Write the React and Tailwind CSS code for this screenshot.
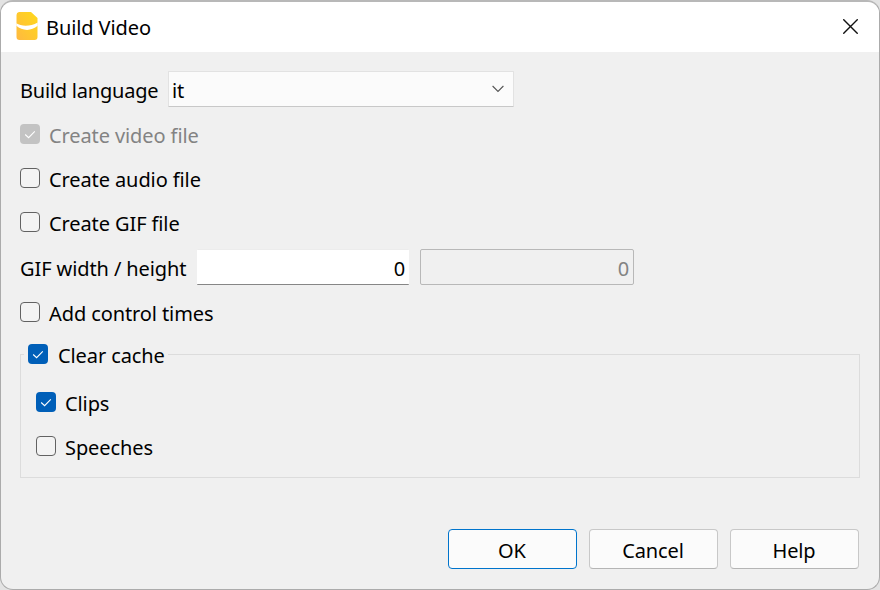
import React from "react";

const boxStyles = {
  off: "border border-[#626262] bg-[#f3f3f3]",
  on: "bg-[#005fb8]",
  disabled: "bg-[#c3c3c3]",
};

function CheckRow({ state = "off", label, gap = "gap-[9px]", text = "" }) {
  return (
    <label className={`flex h-5 items-center ${gap}`}>
      <span className={`flex size-5 shrink-0 items-center justify-center rounded-[4px] ${boxStyles[state]}`}>
        {state !== "off" && (
          <svg viewBox="0 0 20 20" className="size-5" fill="none" stroke="#fff" strokeWidth="1.1">
            <path d="M5.2 10.500 8.600 13.700 14.800 7.300" />
          </svg>
        )}
      </span>
      <span className={`whitespace-nowrap pt-1 ${text}`}>{label}</span>
    </label>
  );
}

function Button({ label, primary }) {
  return (
    <button
      className={`h-10 w-[129px] rounded-[4px] border bg-[#fbfbfb] pt-1 pr-px ${
        primary ? "border-[#0074cc]" : "border-[#c8c8c8] border-b-[#b5b5b5]"
      }`}
    >
      {label}
    </button>
  );
}

export default function App() {
  return (
    <div className="h-[590px] w-[880px] bg-[#e3e3e3] font-['Noto_Sans','Open_Sans',sans-serif] text-[20px] leading-5 tracking-[-0.1px] text-black">
      <div className="flex h-full flex-col overflow-hidden rounded-[13px] border border-t-2 border-[#ababab] border-t-[#b8b8b8] bg-[#f0f0f0]">
        <header className="flex h-[50px] shrink-0 items-center bg-white pl-[15px] pr-[21px]">
          <svg viewBox="0 0 22 28" className="mb-[2px] h-7 w-[22px]">
            <defs>
              <linearGradient id="doc" x1="0" y1="1" x2="1" y2="0">
                <stop offset="0" stopColor="#ffb941" />
                <stop offset="1" stopColor="#ffd91a" />
              </linearGradient>
            </defs>
            <path d="M3 0h12l6.500 6v19a3 3 0 0 1-3 3H3.500a3 3 0 0 1-3-3V3a3 3 0 0 1 2.500-3Z" fill="url(#doc)" />
            <path d="M.3 11.300c5 3.300 14 3.600 21.400-.8v3.300c-6.500 5.700-15.500 5.200-21.400 0Z" fill="#fff" />
          </svg>
          <h1 className="ml-2 pt-px">Build Video</h1>
          <svg viewBox="0 0 15 15" className="mb-px ml-auto size-[15px]" fill="none" stroke="#111" strokeWidth="1.4">
            <path d="M.3.3 14.700 14.700M14.700.3.3 14.700" />
          </svg>
        </header>

        <main className="flex flex-1 flex-col px-[19px] pt-[19px]">
          <div className="flex h-9 items-center">
            <span className="w-[148px] shrink-0 pt-[3px] tracking-[-0.22px]">Build language</span>
            <div className="flex h-9 w-[346px] items-center justify-between rounded-[1px] border border-[#e2e2e2] border-b-[#c8c8c8] bg-[#fbfbfb] pl-[3px] pr-[9px]">
              <span className="pt-[3px]">it</span>
              <svg viewBox="0 0 12 8" className="h-2 w-3" fill="none" stroke="#555" strokeWidth="1.1">
                <path d="M.6 1 6 6.500 11.400 1" />
              </svg>
            </div>
          </div>

          <div className="mt-[17px] flex flex-col gap-6">
            <CheckRow state="disabled" label="Create video file" text="text-[#838383]" />
            <CheckRow label="Create audio file" />
            <CheckRow label="Create GIF file" />
          </div>

          <div className="mt-[17px] flex h-9 items-center">
            <span className="w-[177px] shrink-0 pt-[3px]">GIF width / height</span>
            <div className="flex h-9 w-[212px] items-center justify-end rounded-[1px] border-y border-t-[#ececec] border-b-[#868686] bg-white pr-1 pt-[3px]">
              0
            </div>
            <div className="ml-[11px] flex h-9 w-[214px] items-center justify-end rounded-[2px] border border-[#b8b8b8] pr-1 pt-[3px] text-[#838383]">
              0
            </div>
          </div>

          <div className="mt-[17px]">
            <CheckRow label="Add control times" />
          </div>

          <fieldset className="mt-[22px] h-[134px] border border-[#dcdcdc] pl-[15px]">
            <legend className="-ml-3 h-5 pl-1 pr-[3px]">
              <CheckRow state="on" label="Clear cache" gap="gap-[10px]" />
            </legend>
            <div className="mt-7 flex flex-col gap-6">
              <CheckRow state="on" label="Clips" />
              <CheckRow label="Speeches" />
            </div>
          </fieldset>

          <footer className="mr-px mt-[51px] flex justify-end gap-3">
            <Button label="OK" primary />
            <Button label="Cancel" />
            <Button label="Help" />
          </footer>
        </main>
      </div>
    </div>
  );
}
